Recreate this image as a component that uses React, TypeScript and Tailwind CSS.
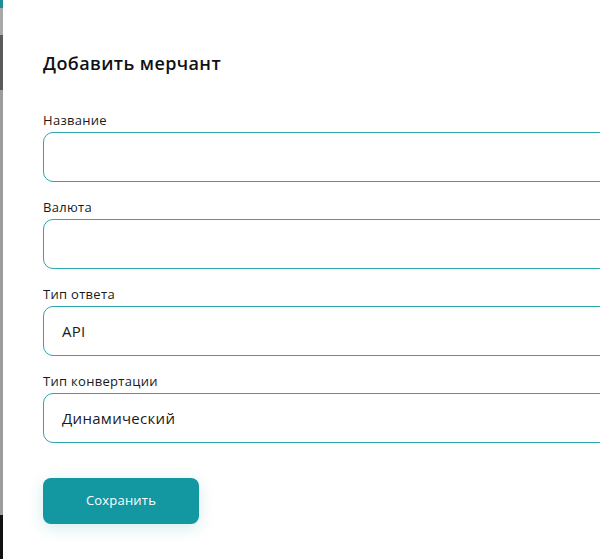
import React from "react";

const fields = [
  { label: "Название", value: "" },
  { label: "Валюта", value: "" },
  { label: "Тип ответа", value: "API" },
  { label: "Тип конвертации", value: "Динамический" },
];

export default function App() {
  return (
    <div
      className="flex h-[559px] w-[600px] overflow-hidden bg-white"
      style={{ fontFamily: '"Open Sans", "Noto Sans", sans-serif' }}
    >
      {/* backdrop strip behind the modal */}
      <div className="flex w-[3px] shrink-0 flex-col">
        <div className="h-[8px] bg-[#1b8f95]" />
        <div className="h-[27px] bg-[#a9a9a9]" />
        <div className="h-[55px] bg-[#5a5a5a]" />
        <div className="h-[425px] bg-[#9d9d9d]" />
        <div className="flex-1 bg-[#111]" />
      </div>

      <div className="w-[660px] shrink-0 rounded-tl-[12px] bg-white pl-[40px] pt-[50px]">
        <h2 className="text-[18px] font-semibold leading-[26px] tracking-[0.4px] text-[#111]">
          Добавить мерчант
        </h2>

        <div className="mt-[36px] flex flex-col gap-[17px]">
          {fields.map((f) => (
            <div key={f.label}>
              <div className="text-[13px] leading-[17px] tracking-[0.3px] text-[#1a1a1a]">{f.label}</div>
              <div className="mt-[3px] flex h-[50px] items-center rounded-[10px] border border-[#2ba6ad] px-[18px] text-[15px] tracking-[0.3px] text-[#1a1a1a]">
                {f.value}
              </div>
            </div>
          ))}
        </div>

        <button className="mt-[35px] h-[46px] w-[156px] rounded-[8px] bg-[#1397a1] text-[13px] font-medium tracking-[0.2px] text-white shadow-[0_4px_16px_rgba(19,151,161,0.18)]">
          Сохранить
        </button>
      </div>
    </div>
  );
}
